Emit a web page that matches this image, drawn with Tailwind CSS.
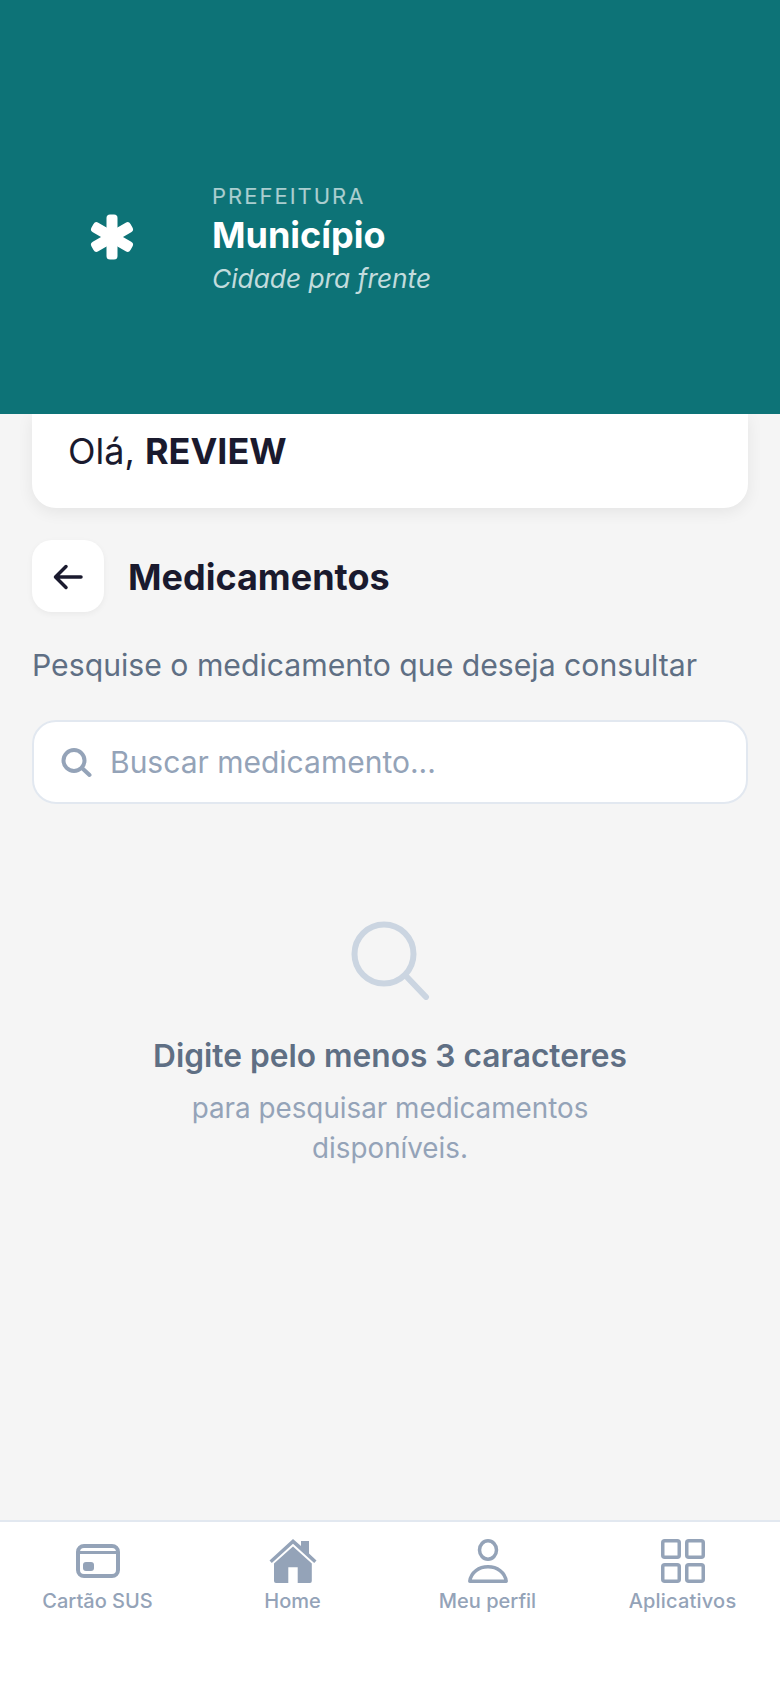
<!DOCTYPE html>
<html lang="pt-BR">
<head>
  <meta charset="UTF-8" />
  <meta name="viewport" content="width=device-width, initial-scale=1.0" />
  <title>Medicamentos</title>
  <script src="https://cdn.jsdelivr.net/npm/@tailwindcss/browser@4"></script>
</head>
<body class="h-[1688px] w-[780px] overflow-hidden bg-[#f5f5f5] font-['Inter',sans-serif]">
  <div class="flex h-full flex-col">
    <!-- Header -->
    <header class="relative z-10 flex h-[414px] items-center bg-[#0d7377] pl-[89px] pt-[66px]">
      <svg class="mb-[7px] w-[46px] h-[46px]" viewBox="0 0 46 46" fill="#fff">
        <rect x="17.5" y="0.5" width="11" height="45" rx="3.5" />
        <rect x="17.5" y="0.5" width="11" height="45" rx="3.5" transform="rotate(60 23 23)" />
        <rect x="17.5" y="0.5" width="11" height="45" rx="3.5" transform="rotate(-60 23 23)" />
      </svg>
      <div class="ml-[77px] flex flex-col">
        <span class="text-[22px] leading-[28px] tracking-[2px] text-white/65">PREFEITURA</span>
        <span class="mt-[3px] text-[36px] leading-[44px] font-bold text-white">Município</span>
        <span class="mt-[3px] text-[26.3px] leading-[38px] italic text-white/75">Cidade pra frente</span>
      </div>
    </header>

    <main class="flex-1 px-[32px]">
      <!-- Greeting -->
      <div class="flex h-[94px] items-start rounded-b-[24px] bg-white pl-[36px] pt-[15px] shadow-[0_4px_16px_rgba(0,0,0,0.07)]">
        <p class="text-[36px] leading-[44px] text-[#1a1a2e]">Olá, <b class="font-bold">REVIEW</b></p>
      </div>

      <div class="mt-[32px] flex items-center gap-[24px]">
        <button class="flex h-[72px] w-[72px] items-center justify-center rounded-[20px] bg-white shadow-[0_2px_6px_rgba(0,0,0,0.05)]">
          <svg class="w-[36px] h-[36px]" viewBox="0 0 36 36" fill="none" stroke="#1a1a2e" stroke-width="3.5" stroke-linecap="round" stroke-linejoin="round">
            <path d="M31 19H6M16 8.500L5.500 19L16 29.500" />
          </svg>
        </button>
        <h1 class="pt-[1px] text-[36px] leading-[48px] font-bold text-[#1a1a2e]">Medicamentos</h1>
      </div>

      <p class="mt-[32px] text-[30.2px] leading-[42px] text-[#5f6f84]">Pesquise o medicamento que deseja consultar</p>

      <div class="mt-[34px] flex h-[84px] items-center rounded-[24px] border-2 border-[#e2e8f0] bg-white pl-[26px]">
        <svg class="w-[32px] h-[32px]" viewBox="0 0 32 32" fill="none" stroke="#94a3b8" stroke-width="4" stroke-linecap="round">
          <circle cx="14" cy="14.5" r="10.500" /><path d="M22 22L29.500 29" />
        </svg>
        <span class="ml-[18px] pt-[1px] text-[30px] text-[#94a3b8]">Buscar medicamento...</span>
      </div>

      <!-- Empty state -->
      <div class="mt-[116px] flex flex-col items-center text-center">
        <svg class="w-[80px] h-[80px]" viewBox="0 0 80 80" fill="none" stroke="#cbd5e1" stroke-width="6" stroke-linecap="round">
          <circle cx="34" cy="34" r="29.500" /><path d="M56 56L76 77" />
        </svg>
        <h2 class="mt-[34px] text-[31.7px] leading-[44px] font-semibold text-[#5f6f84]">Digite pelo menos 3 caracteres</h2>
        <p class="mt-[10px] w-[440px] text-[27.8px] leading-[40px] text-[#94a3b8]">para pesquisar medicamentos disponíveis.</p>
      </div>
    </main>

    <!-- Bottom nav -->
    <nav class="grid h-[168px] grid-cols-4 border-t-2 border-[#e2e8f0] bg-white pt-[17px]">
      <a class="flex flex-col items-center text-[20px] leading-[28px] font-medium text-[#94a3b8]">
        <svg class="w-[48px] h-[48px]" viewBox="0 0 48 48" fill="none" stroke="#94a3b8" stroke-width="4">
          <rect x="4" y="7" width="40" height="30" rx="6" /><path d="M4 13.500H44" stroke-width="3" />
          <rect x="9" y="23" width="11" height="9" rx="3" fill="#94a3b8" stroke="none" />
        </svg>
        Cartão SUS
      </a>
      <a class="flex flex-col items-center text-[20px] leading-[28px] font-medium text-[#94a3b8]">
        <svg class="w-[48px] h-[48px]" viewBox="0 0 48 48" fill="#94a3b8">
          <path d="M24 0L32 7V2H40V14.500L47.500 21.500L45.200 24L24 4.800L2.800 24L.5 21.500Z" />
          <path d="M24 7.500L42.800 24.500V42Q42.800 44 41 44H28.700V28.300H19.300V44H7Q5 44 5 42V24.500Z" />
        </svg>
        Home
      </a>
      <a class="flex flex-col items-center text-[20px] leading-[28px] font-medium text-[#94a3b8]">
        <svg class="w-[48px] h-[48px]" viewBox="0 0 48 48" fill="none" stroke="#94a3b8" stroke-width="3.500" stroke-linejoin="round">
          <ellipse cx="24" cy="11" rx="8.500" ry="9.200" /><path d="M5.800 42.200C7 33 15 27.800 24 27.800C33 27.800 41 33 42.200 42.200Z" />
        </svg>
        Meu perfil
      </a>
      <a class="flex flex-col items-center text-[20px] leading-[28px] font-medium tracking-[0.2px] text-[#94a3b8]">
        <svg class="w-[48px] h-[48px]" viewBox="0 0 48 48" fill="none" stroke="#94a3b8" stroke-width="3.500">
          <rect x="3.750" y="1.750" width="16.500" height="16.500" rx="2" /><rect x="27.750" y="1.750" width="16.500" height="16.500" rx="2" />
          <rect x="3.750" y="25.750" width="16.500" height="16.500" rx="2" /><rect x="27.750" y="25.750" width="16.500" height="16.500" rx="2" />
        </svg>
        Aplicativos
      </a>
    </nav>
  </div>
</body>
</html>
